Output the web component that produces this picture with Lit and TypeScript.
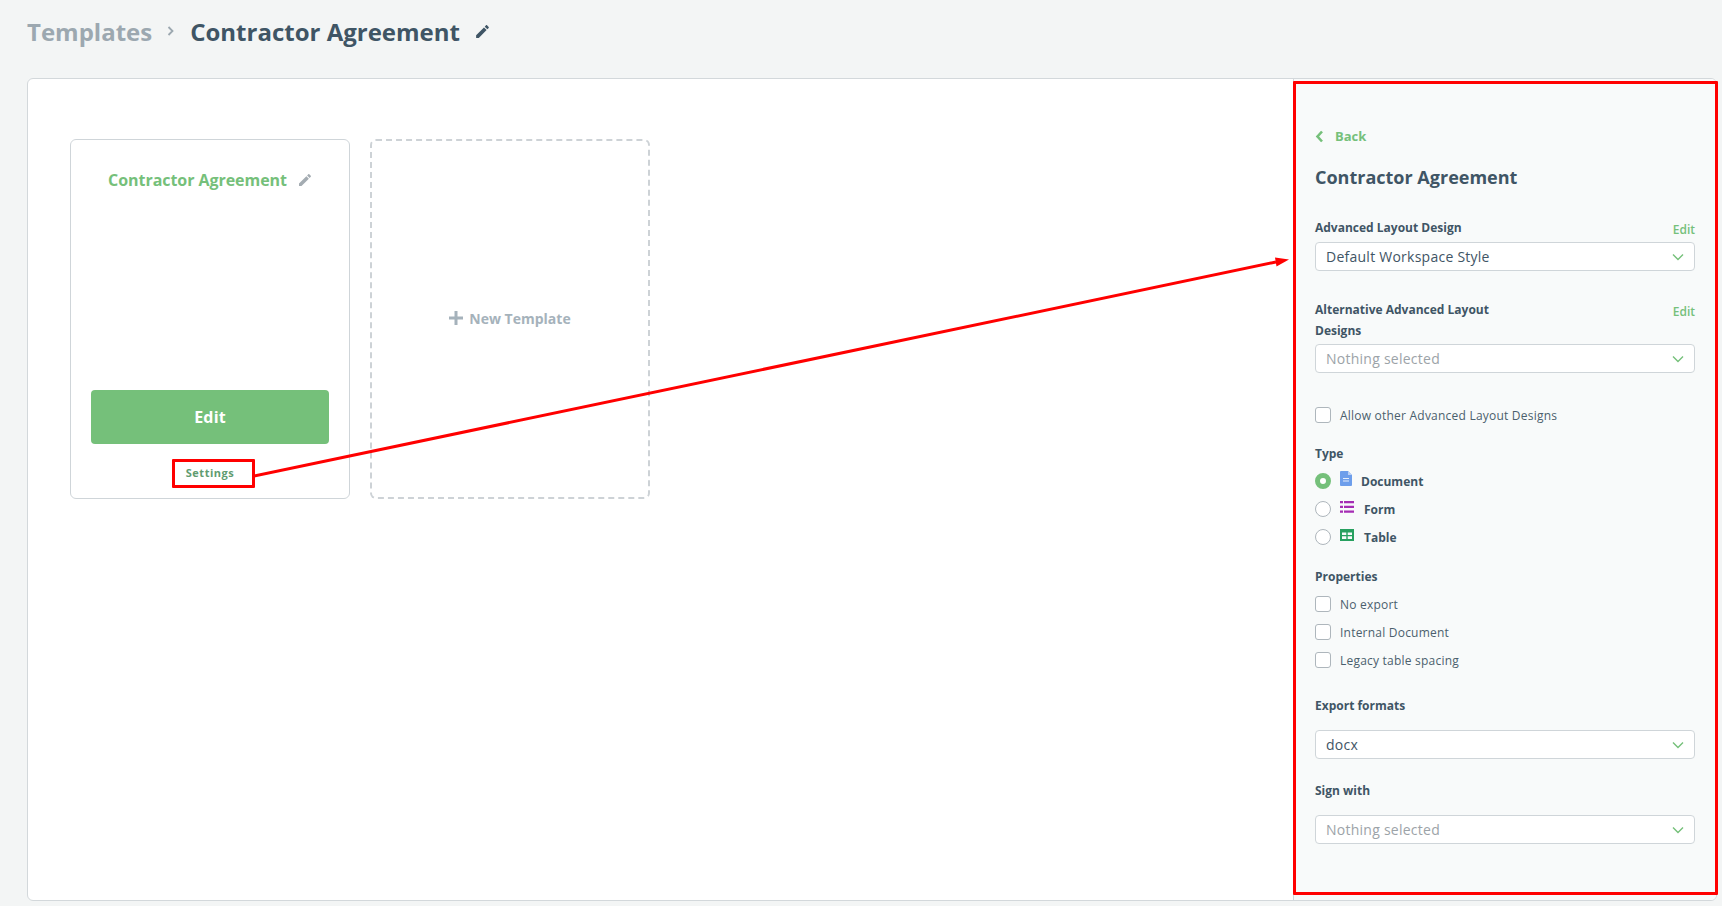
import { LitElement, html, css, svg } from "lit";
import { customElement } from "lit/decorators.js";

const pencil = (cls: string) => html`<svg class=${cls} viewBox="0 0 24 24"><path fill="currentColor" d="M3 17.25V21h3.75L17.81 9.94l-3.75-3.75L3 17.25zM20.71 7.04c.39-.39.39-1.02 0-1.41l-2.34-2.34c-.39-.39-1.02-.39-1.41 0l-1.83 1.83 3.75 3.75 1.83-1.83z"/></svg>`;
const chevron = html`<svg class="sel-chev" viewBox="0 0 12 8"><path d="M1 1.5l5 5 5-5" fill="none" stroke="#75c07a" stroke-width="1.4"/></svg>`;

@customElement("app-root")
export class AppRoot extends LitElement {
  static styles = css`
    :host { display: block; position: relative; height: 906px; overflow: hidden; background: #f3f5f5; font-family: "Open Sans", sans-serif; color: #3f5565; }
    * { box-sizing: border-box; }
    .crumbs { height: 78px; padding: 0 0 15px 27px; display: flex; align-items: center; font-size: 24px; font-weight: 700; }
    .crumb-muted { color: #9ca8b0; }
    .crumb-sep { width: 9px; height: 12px; margin: 0 15px 1px 14px; color: #9ca8b0; }
    .crumb-pencil { width: 17px; height: 17px; margin-left: 14px; color: #3f5565; }
    .card { display: flex; height: 823px; margin: 0 5px 0 27px; background: #fff; border: 1px solid #d3d8db; border-radius: 6px; overflow: hidden; }
    .canvas { flex: 1; display: flex; align-items: flex-start; gap: 20px; padding: 60px 0 0 42px; }
    .tile { width: 280px; height: 360px; border-radius: 6px; }
    .tpl { border: 1px solid #cfd5d9; display: flex; flex-direction: column; align-items: center; padding: 0 20px; }
    .tpl-title { display: flex; align-items: center; height: 24px; margin: 28px 0 0 1px; color: #75c07a; font-size: 16px; font-weight: 700; letter-spacing: -0.05px; }
    .tpl-pencil { width: 16px; height: 16px; margin-left: 10px; color: #a4acb2; }
    .btn { width: 238px; height: 54px; margin-top: auto; background: #75c07a; border-radius: 4px; color: #fff; font-size: 16px; font-weight: 700; letter-spacing: 0.2px; display: flex; align-items: center; justify-content: center; }
    .settings { height: 20px; margin: 19px 0 15px; line-height: 20px; font-size: 11px; font-weight: 700; letter-spacing: 0.5px; color: #5f9c70; }
    .new { border: 2px dashed #cdd2d6; display: flex; align-items: center; justify-content: center; gap: 6px; padding-bottom: 2px; color: #a5b2bb; font-size: 14px; font-weight: 700; }
    .plus { width: 14px; height: 14px; }
    .panel { width: 423px; background: #f8fafa; border-left: 1px solid #d3d8db; padding: 47px 21px 0 21px; font-size: 12px; }
    .back { display: flex; align-items: center; height: 20px; color: #75c07a; font-size: 13px; font-weight: 700; }
    .back svg { width: 9px; height: 13px; margin-right: 11px; }
    h2 { margin: 19px 0 0; font-size: 18px; line-height: 24px; font-weight: 700; color: #3f5565; }
    .field-head { display: flex; justify-content: space-between; align-items: flex-start; margin-bottom: 3px; }
    .field-first { margin-top: 28px; margin-bottom: 2px; }
    .label { display: block; max-width: 200px; font-size: 12px; line-height: 21px; font-weight: 700; color: #3f5565; }
    .edit { margin-top: 2px; line-height: 21px; font-size: 12px; font-weight: 600; color: #75c07a; }
    .select { display: flex; align-items: center; justify-content: space-between; height: 29px; padding: 0 10px; background: #fff; border: 1px solid #cfd5d9; border-radius: 4px; font-size: 14px; letter-spacing: 0.25px; color: #3f5565; }
    .select.empty { color: #9ca3a8; }
    .sel-chev { width: 12px; height: 8px; }
    .row { display: flex; align-items: center; height: 28px; font-size: 12px; letter-spacing: 0.22px; color: #4b5f6d; }
    .box { width: 16px; height: 16px; margin-right: 9px; background: #fff; border: 1px solid #aeb6bc; border-radius: 3px; flex: none; }
    .radio { width: 16px; height: 16px; margin-right: 9px; background: #fff; border: 1px solid #aeb6bc; border-radius: 50%; flex: none; }
    .radio.on { background: #fff; border: 5px solid #75c07a; }
    .type-name { font-weight: 700; letter-spacing: 0; color: #3f5565; }
    .type-icon { margin: -5px 0 0 0; flex: none; display: block; }
    .i-doc { width: 12px; height: 15px; margin-right: 9px; }
    .i-list { width: 14px; height: 12px; margin-right: 10px; }
    .mt-34 { margin-top: 34px; }
    .mt-28 { margin-top: 28px; }
    .mt-type { margin-top: 20px; }
    .mt-props { margin-top: 15px; }
    .mt-export { margin-top: 21px; }
    .mt-sign { margin-top: 21px; }
    .gap3 { margin-bottom: 3px; }
    .gap14 { margin-bottom: 14px; }
    .allow { height: 16px; }
    .overlay { position: absolute; left: 0; top: 0; width: 1722px; height: 906px; pointer-events: none; }
    .arrow { position: absolute; left: 0; top: 0; }
    .mark { position: absolute; border: 3px solid #f00; border-radius: 1px; }
    .mark-panel { left: 1293px; top: 81px; width: 425px; height: 814px; }
    .mark-settings { left: 172px; top: 459px; width: 83px; height: 29px; }
  `;

  render() {
    return html`
      <div class="crumbs">
        <span class="crumb-muted">Templates</span>
        <svg class="crumb-sep" viewBox="0 0 9 12"><path d="M2.500 2l4 4-4 4" fill="none" stroke="currentColor" stroke-width="1.800"/></svg>
        <span>Contractor Agreement</span>
        ${pencil("crumb-pencil")}
      </div>
      <div class="card">
        <div class="canvas">
          <div class="tile tpl">
            <div class="tpl-title">Contractor Agreement ${pencil("tpl-pencil")}</div>
            <div class="btn">Edit</div>
            <div class="settings">Settings</div>
          </div>
          <div class="tile new">
            <svg class="plus" viewBox="0 0 14 14"><path d="M7 0v14M0 7h14" stroke="currentColor" stroke-width="3"/></svg>
            New Template
          </div>
        </div>
        <aside class="panel">
          <div class="back">
            <svg viewBox="0 0 9 13"><path d="M7 1.500L2.500 6.500 7 11.500" fill="none" stroke="#75c07a" stroke-width="2.600"/></svg>
            Back
          </div>
          <h2>Contractor Agreement</h2>
          <div class="field-head field-first"><span class="label">Advanced Layout Design</span><span class="edit">Edit</span></div>
          <div class="select"><span>Default Workspace Style</span>${chevron}</div>
          <div class="field-head mt-28"><span class="label">Alternative Advanced Layout Designs</span><span class="edit">Edit</span></div>
          <div class="select empty"><span>Nothing selected</span>${chevron}</div>
          <div class="row allow mt-34"><span class="box"></span>Allow other Advanced Layout Designs</div>
          <span class="label mt-type gap3">Type</span>
          <div class="row">
            <span class="radio on"></span>
            <svg class="type-icon i-doc" viewBox="0 0 12 15"><path fill="#6d9eeb" d="M1 0h7l4 4v10a1 1 0 0 1-1 1H1a1 1 0 0 1-1-1V1a1 1 0 0 1 1-1z"/><path fill="#b9d0f5" d="M8 0l4 4H8z"/><path fill="#e3ecfb" d="M3 7h6v1H3zM3 9.500h6v1H3z"/></svg>
            <span class="type-name">Document</span>
          </div>
          <div class="row">
            <span class="radio"></span>
            <svg class="type-icon i-list" viewBox="0 0 14 12"><path fill="#a52db4" d="M0 0h3v2.200H0zM4 0h10v2.200H4zM0 4.800h3V7H0zM4 4.800h10V7H4zM0 9.500h3v2.200H0zM4 9.500h10v2.200H4z"/></svg>
            <span class="type-name">Form</span>
          </div>
          <div class="row">
            <span class="radio"></span>
            <svg class="type-icon i-list" viewBox="0 0 14 12"><path fill="#27a05f" fill-rule="evenodd" d="M0 0h14v12H0zM2 3.500v2.500h4.300V3.500zM7.700 3.500v2.500H12V3.500zM2 7.300v2.700h4.300V7.300zM7.700 7.300v2.700H12V7.300z"/></svg>
            <span class="type-name">Table</span>
          </div>
          <span class="label mt-props gap3">Properties</span>
          <div class="row"><span class="box"></span>No export</div>
          <div class="row"><span class="box"></span>Internal Document</div>
          <div class="row"><span class="box"></span>Legacy table spacing</div>
          <span class="label mt-export gap14">Export formats</span>
          <div class="select"><span>docx</span>${chevron}</div>
          <span class="label mt-sign gap14">Sign with</span>
          <div class="select empty"><span>Nothing selected</span>${chevron}</div>
        </aside>
      </div>
      <div class="overlay">
        <div class="mark mark-panel"></div>
        <div class="mark mark-settings"></div>
        <svg class="arrow" width="1722" height="906">
          ${svg`<line x1="254" y1="476" x2="1276" y2="262" stroke="#f00" stroke-width="3"/><path fill="#f00" d="M1289 259.500L1275 257.500 1276.500 266.500z"/>`}
        </svg>
      </div>
    `;
  }
}
